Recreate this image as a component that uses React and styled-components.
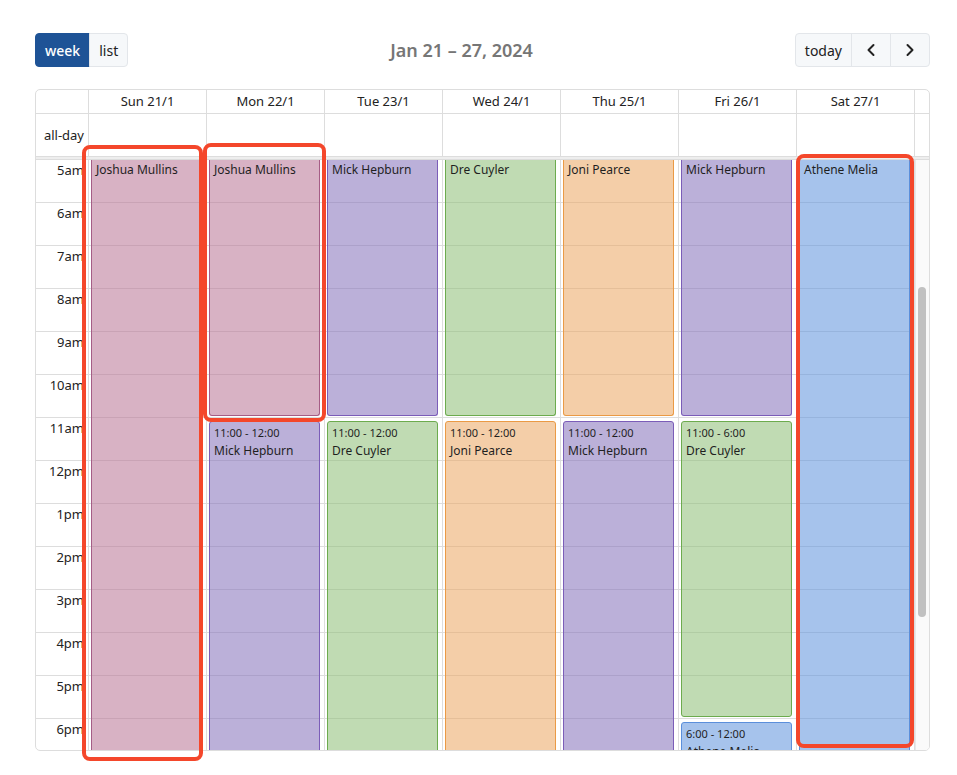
import React from 'react';
import styled, { createGlobalStyle } from 'styled-components';

const GlobalStyle = createGlobalStyle`
  html, body { margin: 0; padding: 0; background: #fff; }
  body { font-family: "Noto Sans", "Liberation Sans", sans-serif; color: #222; }
  * { box-sizing: border-box; }
`;

const HOUR = 43;
const FIRST = 5;
const BODY_H = 591;

const palette = {
  pink: { bg: 'rgba(184,115,148,0.55)', border: '#a55d86' },
  purple: { bg: 'rgba(131,111,186,0.55)', border: '#7b5db8' },
  green: { bg: 'rgba(140,190,117,0.55)', border: '#6cab4e' },
  orange: { bg: 'rgba(235,166,97,0.55)', border: '#ea9a45' },
  blue: { bg: 'rgba(93,146,220,0.55)', border: '#5b8fdb' },
};

const hours = ['5am', '6am', '7am', '8am', '9am', '10am', '11am', '12pm', '1pm', '2pm', '3pm', '4pm', '5pm', '6pm'];

const days = [
  { label: 'Sun 21/1', events: [{ title: 'Joshua Mullins', color: 'pink', start: null, end: null }] },
  {
    label: 'Mon 22/1',
    events: [
      { title: 'Joshua Mullins', color: 'pink', start: null, end: 11 },
      { title: 'Mick Hepburn', time: '11:00 - 12:00', color: 'purple', start: 11, end: null },
    ],
  },
  {
    label: 'Tue 23/1',
    events: [
      { title: 'Mick Hepburn', color: 'purple', start: null, end: 11 },
      { title: 'Dre Cuyler', time: '11:00 - 12:00', color: 'green', start: 11, end: null },
    ],
  },
  {
    label: 'Wed 24/1',
    events: [
      { title: 'Dre Cuyler', color: 'green', start: null, end: 11 },
      { title: 'Joni Pearce', time: '11:00 - 12:00', color: 'orange', start: 11, end: null },
    ],
  },
  {
    label: 'Thu 25/1',
    events: [
      { title: 'Joni Pearce', color: 'orange', start: null, end: 11 },
      { title: 'Mick Hepburn', time: '11:00 - 12:00', color: 'purple', start: 11, end: null },
    ],
  },
  {
    label: 'Fri 26/1',
    events: [
      { title: 'Mick Hepburn', color: 'purple', start: null, end: 11 },
      { title: 'Dre Cuyler', time: '11:00 - 6:00', color: 'green', start: 11, end: 18 },
      { title: 'Athene Melia', time: '6:00 - 12:00', color: 'blue', start: 18, end: null },
    ],
  },
  { label: 'Sat 27/1', events: [{ title: 'Athene Melia', color: 'blue', start: null, end: null }] },
];

const Page = styled.div`
  position: relative;
  width: 957px;
  height: 775px;
  padding: 33px 0 0 35px;
`;

const Frame = styled.div`
  width: 895px;
`;

const Toolbar = styled.div`
  display: flex;
  justify-content: space-between;
  align-items: center;
  height: 34px;
  margin-bottom: 22px;
`;

const ButtonGroup = styled.div`
  display: flex;
`;

const ToolButton = styled.button`
  height: 34px;
  padding: 0 ${(p) => (p.$icon ? '0' : '9px')};
  width: ${(p) => (p.$icon ? '40px' : 'auto')};
  display: flex;
  align-items: center;
  justify-content: center;
  font-family: inherit;
  font-size: 14px;
  font-weight: ${(p) => (p.$active ? 500 : 400)};
  color: ${(p) => (p.$active ? '#fff' : '#222')};
  background: ${(p) => (p.$active ? '#1e5396' : '#f6f8fa')};
  border: 1px solid ${(p) => (p.$active ? '#1e5396' : '#e3e6ea')};
  margin-left: ${(p) => (p.$first ? '0' : '-1px')};
  border-radius: ${(p) => (p.$first ? '4px 0 0 4px' : p.$last ? '0 4px 4px 0' : '0')};
  cursor: pointer;
`;

const Title = styled.h2`
  margin: 0;
  font-size: 18px;
  font-weight: 600;
  color: #767676;
`;

const Calendar = styled.div`
  border: 1px solid #ddd;
  border-radius: 5px;
  overflow: hidden;
  height: 662px;
  display: flex;
  flex-direction: column;
`;

const cols = `53px repeat(7, 118px) 14px`;

const HeaderRow = styled.div`
  display: grid;
  grid-template-columns: ${cols};
  height: 24px;
  border-bottom: 1px solid #ddd;
`;

const HeaderCell = styled.div`
  border-right: ${(p) => (p.$last ? 'none' : '1px solid #ddd')};
  display: flex;
  align-items: center;
  justify-content: center;
  font-size: 13px;
  color: #222;
`;

const AllDayRow = styled.div`
  display: grid;
  grid-template-columns: ${cols};
  height: 42px;
`;

const AllDayCell = styled.div`
  border-right: ${(p) => (p.$last ? 'none' : '1px solid #ddd')};
  display: flex;
  align-items: center;
  justify-content: flex-end;
  padding-right: 4px;
  font-size: 13px;
  color: #222;
`;

const Divider = styled.div`
  height: 4px;
  background: #eee;
  border-top: 1px solid #ddd;
  border-bottom: 1px solid #ddd;
`;

const Body = styled.div`
  display: grid;
  grid-template-columns: ${cols};
  height: ${BODY_H}px;
  overflow: hidden;
`;

const AxisColumn = styled.div`
  border-right: 1px solid #ddd;
  display: flex;
  flex-direction: column;
`;

const SlotLabel = styled.div`
  flex: 0 0 ${HOUR}px;
  border-bottom: 1px solid #ddd;
  text-align: right;
  padding-right: 4px;
  font-size: 13px;
  line-height: 20px;
  color: #222;
`;

const DayColumn = styled.div`
  position: relative;
  border-right: 1px solid #ddd;
  display: flex;
  flex-direction: column;
`;

const Slot = styled.div`
  flex: 0 0 ${HOUR}px;
  border-bottom: 1px solid #ddd;
`;

const EventBox = styled.div`
  position: absolute;
  left: 2px;
  right: 4px;
  background: ${(p) => palette[p.$color].bg};
  border: 1px solid ${(p) => palette[p.$color].border};
  border-top: ${(p) => (p.$clipped ? 'none' : `1px solid ${palette[p.$color].border}`)};
  border-radius: ${(p) => (p.$clipped ? '0 0 3px 3px' : '3px')};
  padding: ${(p) => (p.$clipped ? '2px 4px' : '3px 4px')};
  overflow: hidden;
  color: #1f1f1f;
`;

const EventTime = styled.div`
  font-size: 11px;
  line-height: 16px;
  white-space: nowrap;
`;

const EventTitle = styled.div`
  font-size: 12px;
  line-height: 16px;
  margin-top: ${(p) => (p.$afterTime ? '2px' : '0')};
  white-space: nowrap;
`;

const ScrollTrack = styled.div`
  background: #fafafa;
  border-left: 1px solid #e8e8e8;
  padding: 127px 0 0 2px;
`;

const ScrollThumb = styled.div`
  width: 8px;
  height: 330px;
  border-radius: 4px;
  background: #c1c1c1;
`;

const Highlight = styled.div`
  position: absolute;
  left: ${(p) => p.$x}px;
  top: ${(p) => p.$y}px;
  width: ${(p) => p.$w}px;
  height: ${(p) => p.$h}px;
  border: 4px solid #f4472b;
  border-radius: 8px;
  pointer-events: none;
`;

const Chevron = ({ dir }) => (
  <svg width="12" height="14" viewBox="0 0 12 14" fill="none">
    <path
      d={dir === 'left' ? 'M8.5 2 L3.5 7 L8.5 12' : 'M3.5 2 L8.5 7 L3.5 12'}
      stroke="#222"
      strokeWidth="2"
      strokeLinecap="round"
      strokeLinejoin="round"
    />
  </svg>
);

function eventGeometry(ev) {
  const top = ev.start == null ? 0 : (ev.start - FIRST) * HOUR + 3;
  const bottom = ev.end == null ? BODY_H + 40 : (ev.end - FIRST) * HOUR - 2;
  return { top, height: bottom - top };
}

export default function App() {
  return (
    <>
      <GlobalStyle />
      <Page>
        <Frame>
          <Toolbar>
            <ButtonGroup>
              <ToolButton $active $first>week</ToolButton>
              <ToolButton $last>list</ToolButton>
            </ButtonGroup>
            <Title>Jan 21 – 27, 2024</Title>
            <ButtonGroup>
              <ToolButton $first>today</ToolButton>
              <ToolButton $icon aria-label="prev">
                <Chevron dir="left" />
              </ToolButton>
              <ToolButton $icon $last aria-label="next">
                <Chevron dir="right" />
              </ToolButton>
            </ButtonGroup>
          </Toolbar>
          <Calendar>
            <HeaderRow>
              <HeaderCell />
              {days.map((d) => (
                <HeaderCell key={d.label}>{d.label}</HeaderCell>
              ))}
              <HeaderCell $last />
            </HeaderRow>
            <AllDayRow>
              <AllDayCell>all-day</AllDayCell>
              {days.map((d) => (
                <AllDayCell key={d.label} />
              ))}
              <AllDayCell $last />
            </AllDayRow>
            <Divider />
            <Body>
              <AxisColumn>
                {hours.map((h) => (
                  <SlotLabel key={h}>{h}</SlotLabel>
                ))}
              </AxisColumn>
              {days.map((d) => (
                <DayColumn key={d.label}>
                  {hours.map((h) => (
                    <Slot key={h} />
                  ))}
                  {d.events.map((ev, i) => {
                    const g = eventGeometry(ev);
                    return (
                      <EventBox
                        key={i}
                        $color={ev.color}
                        $clipped={ev.start == null}
                        style={{ top: g.top, height: g.height }}
                      >
                        {ev.time && <EventTime>{ev.time}</EventTime>}
                        <EventTitle $afterTime={!!ev.time}>{ev.title}</EventTitle>
                      </EventBox>
                    );
                  })}
                </DayColumn>
              ))}
              <ScrollTrack>
                <ScrollThumb />
              </ScrollTrack>
            </Body>
          </Calendar>
        </Frame>
        <Highlight $x={82} $y={145} $w={121} $h={616} />
        <Highlight $x={203} $y={143} $w={123} $h={279} />
        <Highlight $x={796} $y={154} $w={118} $h={594} />
      </Page>
    </>
  );
}
